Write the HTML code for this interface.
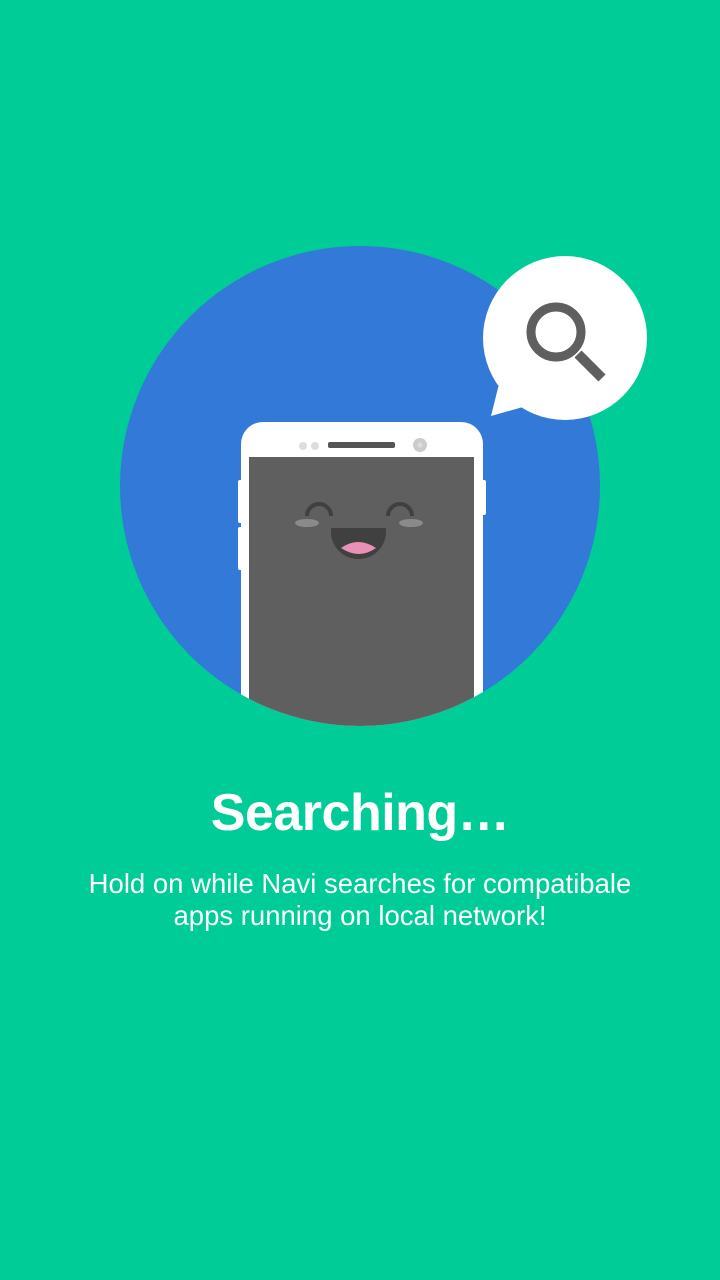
<!DOCTYPE html>
<html><head><style>
body{margin:0;width:720px;height:1280px;background:#00cc98;overflow:hidden;font-family:"Liberation Sans",sans-serif;position:relative}
h1{position:absolute;top:783px;left:0;width:720px;text-align:center;margin:0;color:#fff;font-size:52px;font-weight:bold;letter-spacing:-0.5px}
p{position:absolute;top:868px;left:0;width:720px;text-align:center;margin:0;color:#fff;font-size:27.5px;line-height:32px}
</style></head><body>
<svg width="720" height="760" style="position:absolute;top:0;left:0">
<defs><clipPath id="c"><circle cx="360" cy="486" r="240"/></clipPath></defs>
<circle cx="360" cy="486" r="240" fill="#3379d8"/>
<g clip-path="url(#c)">
<rect x="238" y="480" width="6" height="43" rx="2" fill="#fff"/>
<rect x="238" y="527" width="6" height="43" rx="2" fill="#fff"/>
<rect x="480" y="480" width="6" height="35" rx="2" fill="#fff"/>
<rect x="241" y="422" width="242" height="400" rx="22" fill="#fff"/>
<rect x="249" y="457" width="225" height="360" fill="#5f5f5f"/>
</g>
<circle cx="303" cy="446" r="4" fill="#ddd"/><circle cx="315" cy="446" r="4" fill="#ddd"/>
<rect x="328" y="442" width="67" height="6" rx="2" fill="#555"/>
<circle cx="420" cy="445" r="7" fill="#ccc"/><circle cx="420" cy="445" r="2.5" fill="#ddd"/>
<path d="M307 516 a12 12 0 0 1 24 0 M388 516 a12 12 0 0 1 24 0" fill="none" stroke="#404040" stroke-width="4"/>
<ellipse cx="307" cy="523" rx="12" ry="4" fill="#8a8a8a"/><ellipse cx="411" cy="523" rx="12" ry="4" fill="#8a8a8a"/>
<path d="M331 528 h55 v4 a27.5 27 0 0 1 -55 0 z" fill="#404040"/>
<path d="M341 548 q17 -12 35 0 q-17 12 -35 0z" fill="#e891b6"/>
<circle cx="565" cy="338" r="82" fill="#fff"/>
<path d="M500 380 L491 416 L530 405 Z" fill="#fff"/>
<circle cx="556" cy="332" r="25" fill="none" stroke="#5f5f5f" stroke-width="9"/>
<path d="M578 354 L602 378" stroke="#5f5f5f" stroke-width="10"/>
</svg>
<h1>Searching…</h1>
<p>Hold on while Navi searches for compatibale<br>apps running on local network!</p>
</body></html>
